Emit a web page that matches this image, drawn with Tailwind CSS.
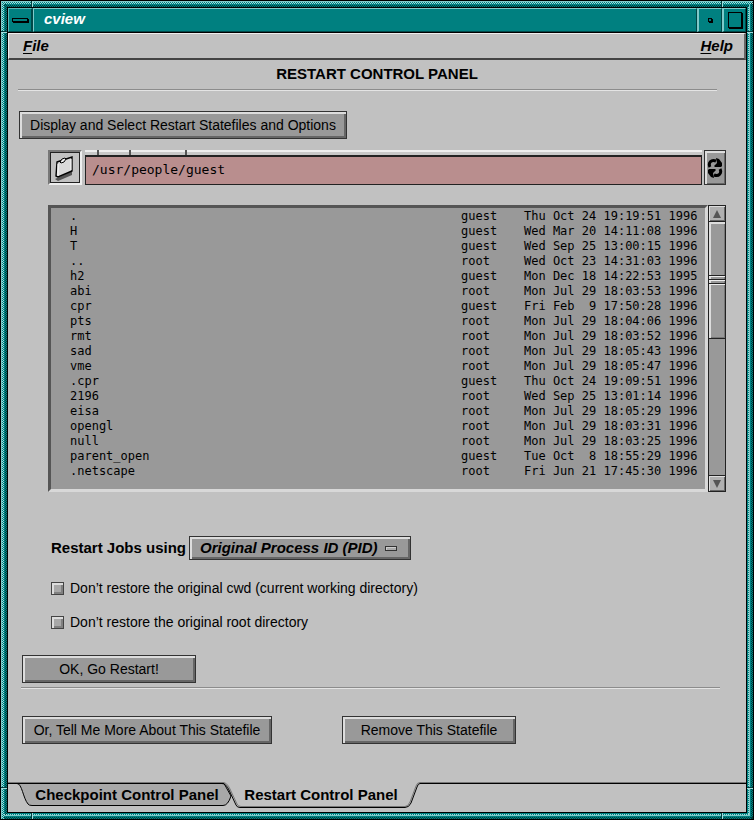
<!DOCTYPE html>
<html lang="en">

<head>
    <meta charset="UTF-8">
    <meta name="viewport" content="width=device-width, initial-scale=1.0">
    <title>cview</title>
    <script src="https://cdn.jsdelivr.net/npm/@tailwindcss/browser@4"></script>
</head>

<body class="bg-black font-['Liberation_Sans',Arial,sans-serif] text-[15px] leading-5 text-black">

    <!-- Window frame -->
    <div class="relative min-h-screen flex flex-col p-px bg-black">
        <div class="grow flex flex-col p-[3px] [background:linear-gradient(#7fcaca,#7fcaca)_left/1px_100%_no-repeat,linear-gradient(#7fcaca,#7fcaca)_top/100%_1px_no-repeat,repeating-conic-gradient(#0000_0_25%,#9fdcdc_0_50%)_left_1px_top/2px_2px_repeat-y,repeating-conic-gradient(#0000_0_25%,#9fdcdc_0_50%)_left_top_1px/2px_2px_repeat-x,repeating-conic-gradient(#0000_0_25%,#003c3c_0_50%)_right/2px_2px_repeat-y,repeating-conic-gradient(#0000_0_25%,#003c3c_0_50%)_bottom/2px_2px_repeat-x,#008080]">
            <div class="grow flex flex-col p-[3px] [background:linear-gradient(#7fcaca,#7fcaca)_right/1px_100%_no-repeat,linear-gradient(#7fcaca,#7fcaca)_bottom/100%_1px_no-repeat,repeating-conic-gradient(#0000_0_25%,#003c3c_0_50%)_left_1px_top/2px_2px_repeat-y,repeating-conic-gradient(#0000_0_25%,#003c3c_0_50%)_left_top_1px/2px_2px_repeat-x,repeating-conic-gradient(#0000_0_25%,#9fdcdc_0_50%)_right/2px_2px_repeat-y,repeating-conic-gradient(#0000_0_25%,#9fdcdc_0_50%)_bottom/2px_2px_repeat-x,#008080]">
                <div class="grow flex flex-col p-px bg-black">

                    <!-- Title bar -->
                    <header class="flex h-6 mb-px bg-[#008080] text-white">
                        <button aria-label="Window menu" class="w-[25px] flex items-center justify-center border-t border-l border-[#5fb8b8] border-b border-b-[#004848] border-r-2 border-r-[#004848]">
                            <span class="w-4 h-1 border border-black shadow-[1px_1px_0_#000]"></span>
                        </button>
                        <h1 class="grow pl-[10px] border-t border-l border-[#7fcaca] border-b border-b-[#004848] border-r border-r-[#004848] font-bold italic leading-[19px]">cview</h1>
                        <button aria-label="Minimize" class="w-[25px] flex items-center justify-center border-t border-l-2 border-[#7fcaca] border-b border-b-[#004848] border-r border-r-[#004848]">
                            <span class="size-1 border border-black shadow-[1px_1px_0_#000]"></span>
                        </button>
                        <button aria-label="Maximize" class="w-6 flex items-center justify-center border-t border-l-2 border-[#7fcaca] border-b border-b-[#004848] border-r border-r-[#004848]">
                            <span class="w-[14px] h-4 border border-black shadow-[1px_1px_0_#000]"></span>
                        </button>
                    </header>

                    <!-- Menu bar -->
                    <nav class="flex justify-between h-[27px] pl-[14px] pr-[11px] bg-[#c1c1c1] border-t border-l border-[#eeeeee] border-b-2 border-b-[#444444] border-r-2 border-r-[#666666] font-bold italic">
                        <button class="underline-offset-2"><span class="underline">F</span>ile</button>
                        <button class="underline-offset-2"><span class="underline">H</span>elp</button>
                    </nav>

                    <main class="grow flex flex-col bg-[#c1c1c1] text-[14px]">
                        <h2 class="pt-1 text-center font-bold text-[15px]">RESTART CONTROL PANEL</h2>
                        <hr class="mt-[5px] ml-[10px] mr-[29px] border-t border-[#8c8c8c] border-b border-b-[#e4e4e4] h-[2px]">

                        <section class="pl-10 pr-5">
                            <button class="block -ml-[29px] mt-5 h-7 w-[328px] whitespace-nowrap bg-[#999999] border border-[#333333] shadow-[inset_2px_2px_0_#dddddd,inset_-2px_-2px_0_#666666]">Display and Select Restart Statefiles and Options</button>

                            <!-- Directory path -->
                            <div class="mt-[11px] flex h-[35px]">
                                <button aria-label="Open folder" class="w-[34px] border-t-2 border-l-2 border-[#777777] border-b-2 border-r-2 border-b-[#eeeeee] border-r-[#eeeeee] bg-[#c1c1c1] shadow-[inset_0_0_0_1px_#222222] flex items-center justify-center">
                                    <svg width="24" height="28" viewBox="0 0 24 28">
                                        <path d="M2 25L19 17V21L5 27Z" fill="#555" />
                                        <path d="M4 8L19 3V17L5 23L3 22Z" fill="#dadada" stroke="#000" stroke-width="1.4" />
                                        <path d="M7 8L9 5L12 4L13 5L11 8L8 9Z" fill="#eee" stroke="#000" />
                                        <path d="M5 10V22M18 5V16" stroke="#fff" />
                                    </svg>
                                </button>
                                <div class="grow ml-[3px] flex flex-col">
                                    <div class="flex h-[5px] gap-[2px] bg-[#555555]">
                                        <span class="w-3 bg-[#c8c8c8] border-t-2 border-[#eeeeee]"></span>
                                        <span class="w-[30px] bg-[#c8c8c8] border-t-2 border-[#eeeeee]"></span>
                                        <span class="w-[54px] bg-[#c8c8c8] border-t-2 border-[#eeeeee]"></span>
                                        <span class="grow bg-[#c8c8c8] border-t-2 border-[#eeeeee]"></span>
                                    </div>
                                    <input aria-label="Directory" value="/usr/people/guest" class="w-full grow border border-t-2 border-[#222222] bg-[#b98e8e] px-[6px] pb-px text-[13px] font-['DejaVu_Sans_Mono',monospace]">
                                </div>
                                <button aria-label="Recycle path" class="shrink-0 w-[22px] ml-[2px] bg-[#999999] border border-[#333333] shadow-[inset_2px_2px_0_#dddddd,inset_-1px_-1px_0_#666666] flex items-center justify-center">
                                    <svg width="16" height="22" viewBox="0 0 16 22">
                                        <g id="arrow">
                                            <path d="M3 10C1 6 4 2 9 4" fill="none" stroke="#000" stroke-width="3" />
                                            <path d="M9 1L12 2L15 6V9L14 10H8L7 9L10 6Z" />
                                        </g>
                                        <use href="#arrow" transform="rotate(180 8 11)" />
                                    </svg>
                                </button>
                            </div>

                            <!-- File list -->
                            <div class="mt-5 flex">
                                <div class="grow h-[287px] border-t-[3px] border-l-[3px] border-[#555555] border-b-[3px] border-r-[3px] border-b-[#d8d8d8] border-r-[#d8d8d8] bg-[#999999] overflow-hidden">
                                    <table class="w-full table-fixed mt-px text-[12px] leading-[15px] font-['DejaVu_Sans_Mono',monospace] whitespace-pre">
                                        <colgroup>
                                            <col>
                                            <col class="w-[63px]">
                                            <col class="w-[181px]">
                                        </colgroup>
                                        <tbody id="files"></tbody>
                                    </table>
                                </div>
                                <div class="shrink-0 w-[18px] flex flex-col border border-[#222222] bg-[#999999]">
                                    <button aria-label="Scroll up" class="h-[15px] flex items-center justify-center bg-[#b0b0b0] shadow-[inset_1px_1px_0_#dddddd,inset_-1px_-1px_0_#666666]">
                                        <svg width="8" height="8" viewBox="0 0 8 8"><path d="M4 0L8 8H0Z" fill="#555" /></svg>
                                    </button>
                                    <div class="grow border-y border-[#222222]">
                                        <div class="h-[117px] flex flex-col justify-center gap-[2px] border-b border-[#222222] bg-[#999999] shadow-[inset_2px_2px_0_#dddddd,inset_-1px_-1px_0_#777777]">
                                            <span class="h-[2px] border-t border-[#222222] bg-[#eeeeee]"></span>
                                            <span class="h-[2px] border-t border-[#222222] bg-[#eeeeee]"></span>
                                            <span class="h-[2px] border-t border-[#222222] bg-[#eeeeee]"></span>
                                        </div>
                                    </div>
                                    <button aria-label="Scroll down" class="h-[15px] flex items-center justify-center bg-[#b0b0b0] shadow-[inset_1px_1px_0_#dddddd,inset_-1px_-1px_0_#666666]">
                                        <svg width="8" height="8" viewBox="0 0 8 8"><path d="M0 0H8L4 8Z" fill="#555" /></svg>
                                    </button>
                                </div>
                            </div>
                        </section>

                        <!-- Restart options -->
                        <section class="mt-11 pl-[43px]">
                            <div class="flex items-center h-6 text-[15px]">
                                <label for="pid" class="w-[138px] font-bold">Restart Jobs using</label>
                                <div class="relative">
                                    <select id="pid" class="block appearance-none w-[222px] h-6 pl-[10px] bg-[#999999] border border-[#333333] shadow-[inset_2px_2px_0_#dddddd,inset_-2px_-2px_0_#666666] font-bold italic leading-5">
                                        <option>Original Process ID (PID)</option>
                                    </select>
                                    <span class="absolute right-[14px] top-[10px] w-3 h-[5px] bg-[#aaaaaa] border border-[#333333] shadow-[inset_1px_1px_0_#cccccc] pointer-events-none"></span>
                                </div>
                            </div>
                            <label class="mt-[18px] flex items-center gap-[6px]">
                                <input type="checkbox" class="appearance-none size-[13px] bg-[#a8a8a8] border border-[#444444] shadow-[inset_2px_2px_0_#dddddd,inset_-2px_-2px_0_#808080]">
                                Don’t restore the original cwd (current working directory)
                            </label>
                            <label class="mt-[14px] flex items-center gap-[6px]">
                                <input type="checkbox" class="appearance-none size-[13px] bg-[#a8a8a8] border border-[#444444] shadow-[inset_2px_2px_0_#dddddd,inset_-2px_-2px_0_#808080]">
                                Don’t restore the original root directory
                            </label>
                        </section>

                        <button class="ml-[14px] mt-[23px] h-7 w-[174px] bg-[#999999] border border-[#333333] shadow-[inset_2px_2px_0_#dddddd,inset_-2px_-2px_0_#666666]">OK, Go Restart!</button>
                        <hr class="mt-1 ml-[13px] mr-[26px] border-t border-[#8c8c8c] border-b border-b-[#e4e4e4] h-[2px]">
                        <div class="mt-[27px] mb-8 ml-[14px] flex gap-[70px]">
                            <button class="h-7 w-[250px] whitespace-nowrap bg-[#999999] border border-[#333333] shadow-[inset_2px_2px_0_#dddddd,inset_-2px_-2px_0_#666666]">Or, Tell Me More About This Statefile</button>
                            <button class="h-7 w-[174px] whitespace-nowrap bg-[#999999] border border-[#333333] shadow-[inset_2px_2px_0_#dddddd,inset_-2px_-2px_0_#666666]">Remove This Statefile</button>
                        </div>

                        <!-- Panel tabs -->
                        <div class="relative mt-auto flex h-[30px] text-[15px] font-bold">
                            <svg class="shrink-0" width="412" height="30" viewBox="0 0 412 30" fill="none">
                                <path d="M9 1.5C14 1.5 15 16 20 22Q21 23.500 24 23.500H215Q220 23.500 223 14L216 1.500Z" fill="#a8a8a8" stroke="#000" />
                                <path d="M0 .5H215Q219 .5 222 7L229 22Q230 24.500 233 24.500H397Q400 24.500 402 20L408 4Q409 .5 412 .5" stroke="#777" />
                                <path d="M0 1.500H214Q218 1.500 221 8L228 23Q229 25.500 232 25.500H397Q401 25.500 403 21L409 5Q410 1.500 412 1.500" stroke="#000" />
                            </svg>
                            <div class="grow h-[2px] border-t border-[#777777] bg-black"></div>
                            <div class="absolute inset-0 flex pt-[3px]">
                                <button class="ml-[19px] w-[200px] h-5">Checkpoint Control Panel</button>
                                <button class="ml-2 w-[172px] h-5">Restart Control Panel</button>
                            </div>
                        </div>
                    </main>
                </div>
            </div>
        </div>

        <!-- Resize grips -->
        <span class="absolute left-[31px] top-px w-[2px] h-[6px] border-l border-[#003c3c] bg-[#9fdcdc]"></span>
        <span class="absolute right-[31px] top-px w-[2px] h-[6px] border-l border-[#003c3c] bg-[#9fdcdc]"></span>
        <span class="absolute left-[31px] bottom-px w-[2px] h-[6px] border-l border-[#003c3c] bg-[#9fdcdc]"></span>
        <span class="absolute right-[31px] bottom-px w-[2px] h-[6px] border-l border-[#003c3c] bg-[#9fdcdc]"></span>
        <span class="absolute left-px top-[31px] h-[2px] w-[6px] border-t border-[#003c3c] bg-[#9fdcdc]"></span>
        <span class="absolute right-px top-[31px] h-[2px] w-[6px] border-t border-[#003c3c] bg-[#9fdcdc]"></span>
        <span class="absolute left-px bottom-[31px] h-[2px] w-[6px] border-t border-[#003c3c] bg-[#9fdcdc]"></span>
        <span class="absolute right-px bottom-[31px] h-[2px] w-[6px] border-t border-[#003c3c] bg-[#9fdcdc]"></span>
    </div>

    <script>
        const files = [
            ['.', 'guest', 'Thu Oct 24 19:19:51 1996'],
            ['H', 'guest', 'Wed Mar 20 14:11:08 1996'],
            ['T', 'guest', 'Wed Sep 25 13:00:15 1996'],
            ['..', 'root', 'Wed Oct 23 14:31:03 1996'],
            ['h2', 'guest', 'Mon Dec 18 14:22:53 1995'],
            ['abi', 'root', 'Mon Jul 29 18:03:53 1996'],
            ['cpr', 'guest', 'Fri Feb  9 17:50:28 1996'],
            ['pts', 'root', 'Mon Jul 29 18:04:06 1996'],
            ['rmt', 'root', 'Mon Jul 29 18:03:52 1996'],
            ['sad', 'root', 'Mon Jul 29 18:05:43 1996'],
            ['vme', 'root', 'Mon Jul 29 18:05:47 1996'],
            ['.cpr', 'guest', 'Thu Oct 24 19:09:51 1996'],
            ['2196', 'root', 'Wed Sep 25 13:01:14 1996'],
            ['eisa', 'root', 'Mon Jul 29 18:05:29 1996'],
            ['opengl', 'root', 'Mon Jul 29 18:03:31 1996'],
            ['null', 'root', 'Mon Jul 29 18:03:25 1996'],
            ['parent_open', 'guest', 'Tue Oct  8 18:55:29 1996'],
            ['.netscape', 'root', 'Fri Jun 21 17:45:30 1996']
        ];

        document.getElementById('files').innerHTML = files.map(([name, owner, date]) => `
            <tr>
                <td class="p-0 pl-[19px]">${name}</td>
                <td class="p-0">${owner}</td>
                <td class="p-0">${date}</td>
            </tr>`).join('');
    </script>
</body>

</html>
